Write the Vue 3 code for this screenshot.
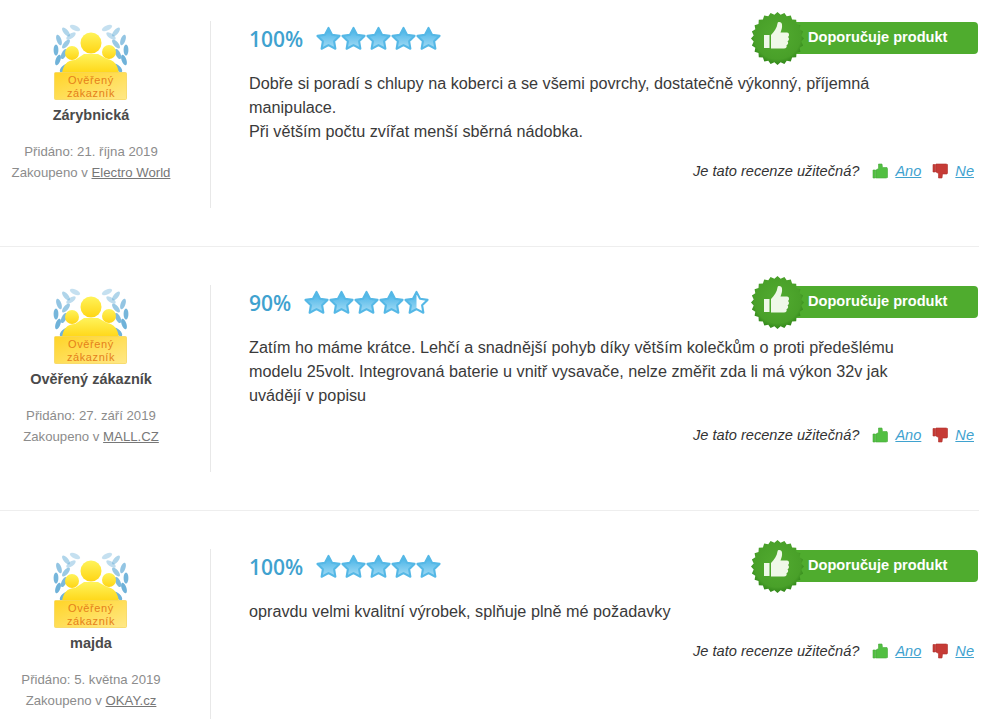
<script setup>
const reviews = [
  {
    name: 'Zárybnická',
    added: '21. října 2019',
    shop: 'Electro World',
    percent: 100,
    lines: [
      'Dobře si poradí s chlupy na koberci a se všemi povrchy, dostatečně výkonný, příjemná manipulace.',
      'Při větším počtu zvířat menší sběrná nádobka.'
    ]
  },
  {
    name: 'Ověřený zákazník',
    added: '27. září 2019',
    shop: 'MALL.CZ',
    percent: 90,
    lines: [
      'Zatím ho máme krátce. Lehčí a snadnější pohyb díky větším kolečkům o proti předešlému modelu 25volt. Integrovaná baterie u vnitř vysavače, nelze změřit zda li má výkon 32v jak uvádějí v popisu'
    ]
  },
  {
    name: 'majda',
    added: '5. května 2019',
    shop: 'OKAY.cz',
    percent: 100,
    lines: ['opravdu velmi kvalitní výrobek, splňuje plně mé požadavky']
  }
]

// pilovity okraj pecete
const sealPoints = () => {
  const pts = []
  const teeth = 24
  for (let i = 0; i < teeth * 2; i++) {
    const r = i % 2 ? 24 : 26.5
    const a = (Math.PI * i) / teeth
    pts.push(`${(26.5 + r * Math.cos(a)).toFixed(1)},${(26.5 + r * Math.sin(a)).toFixed(1)}`)
  }
  return pts.join(' ')
}
const seal = sealPoints()

// listky vavrinu: x, y, natoceni, pruhlednost
const leaves = [
  [22, 4, 25, 0.4],
  [13, 8, 50, 0.55],
  [6, 16, 70, 0.75],
  [3, 26, 90, 0.95],
  [5, 36, 110, 1],
  [11, 44, 135, 1],
  [18, 12, -35, 0.45],
  [13, 20, -50, 0.7],
  [11, 30, -65, 0.9]
]

const starPath = 'M12 1.8 L15.4 8.4 L22.6 9.5 L17.4 14.6 L18.6 21.8 L12 18.4 L5.4 21.8 L6.6 14.6 L1.4 9.5 L8.6 8.4 Z'

// kolik procent hvezdy je vyplneno
const starFill = (percent, i) => {
  const v = percent / 20 - i
  return Math.max(0, Math.min(1, v)) * 24
}
</script>

<template>
  <div class="list">
    <div v-for="(r, idx) in reviews" :key="idx" class="review">
      <div class="side">
        <svg class="avatar" width="76" height="76" viewBox="0 0 76 76">
          <defs>
            <linearGradient :id="`head${idx}`" x1="0" y1="0" x2="0" y2="1">
              <stop offset="0" stop-color="#fff35a" />
              <stop offset="1" stop-color="#ffd514" />
            </linearGradient>
            <linearGradient :id="`sign${idx}`" x1="0" y1="0" x2="1" y2="1">
              <stop offset="0" stop-color="#ffd427" />
              <stop offset="1" stop-color="#ffe887" />
            </linearGradient>
          </defs>
          <g fill="#6fb2d9">
            <ellipse v-for="(l, n) in leaves" :key="n" :cx="l[0]" :cy="l[1]" rx="5.5" ry="2.4" :opacity="l[3]" :transform="`rotate(${l[2]} ${l[0]} ${l[1]})`" />
          </g>
          <g fill="#6fb2d9" transform="translate(76 0) scale(-1 1)">
            <ellipse v-for="(l, n) in leaves" :key="n" :cx="l[0]" :cy="l[1]" rx="5.5" ry="2.4" :opacity="l[3]" :transform="`rotate(${l[2]} ${l[0]} ${l[1]})`" />
          </g>
          <circle cx="19" cy="29" r="7" :fill="`url(#head${idx})`" />
          <circle cx="56" cy="28" r="7" :fill="`url(#head${idx})`" />
          <path d="M9 50 C10 41 14 36 22 36 L31 30 L45 30 L54 35 C61 36 65 41 66 50 Z" :fill="`url(#head${idx})`" />
          <circle cx="38" cy="19" r="10.5" :fill="`url(#head${idx})`" />
          <rect x="1.5" y="48.5" width="72" height="27" rx="1" :fill="`url(#sign${idx})`" stroke="#f6d65a" stroke-width=".8" />
          <text x="38" y="60" class="sign-text">Ověřený</text>
          <text x="38" y="72.8" class="sign-text">zákazník</text>
        </svg>
        <div class="name">{{ r.name }}</div>
        <div class="meta">Přidáno: {{ r.added }}</div>
        <div class="meta">Zakoupeno v <a class="shop">{{ r.shop }}</a></div>
      </div>

      <div class="main">
        <div class="head">
          <span class="score">{{ r.percent }}%</span>
          <div class="stars">
            <svg v-for="i in 5" :key="i" width="25" height="25" viewBox="0 0 24 24">
              <defs>
                <linearGradient :id="`star${idx}-${i}`" x1="0" y1="0" x2="0" y2="1">
                  <stop offset="0" stop-color="#3fb0e6" />
                  <stop offset="1" stop-color="#a5dcf5" />
                </linearGradient>
                <clipPath :id="`clip${idx}-${i}`">
                  <rect x="0" y="0" :width="starFill(r.percent, i - 1)" height="24" />
                </clipPath>
              </defs>
              <path :d="starPath" fill="#fff" />
              <path :d="starPath" :fill="`url(#star${idx}-${i})`" :clip-path="`url(#clip${idx}-${i})`" />
              <path :d="starPath" fill="none" stroke="#55b8e6" stroke-width="2" stroke-linejoin="round" />
            </svg>
          </div>
          <div class="badge">
            <svg class="seal" width="53" height="53" viewBox="0 0 53 53">
              <defs>
                <radialGradient :id="`seal${idx}`" cx="50%" cy="45%" r="55%">
                  <stop offset="0" stop-color="#52ab30" />
                  <stop offset=".8" stop-color="#49a029" />
                  <stop offset="1" stop-color="#2f8418" />
                </radialGradient>
              </defs>
              <polygon :points="seal" :fill="`url(#seal${idx})`" />
              <path d="M13 23 H18.5 V36 H13 Z" fill="#eff8e8" />
              <path d="M20 23 C23 20 26 16 26.5 11.5 C26.7 9.5 30.5 9.5 31 12.5 C31.4 15.5 30.5 18 29.5 20.5 L36 20.5 C38.5 20.5 38.5 24 37 25 C38.5 26 38.3 28.6 36.5 29.3 C37.7 30.5 37.2 32.8 35.5 33.3 C36.2 35 35.2 36.5 33 36.5 L20 36.5 Z" fill="#eff8e8" />
            </svg>
            <span class="badge-bar">Doporučuje produkt</span>
          </div>
        </div>

        <div class="text">
          <p v-for="(line, n) in r.lines" :key="n">{{ line }}</p>
        </div>

        <div class="useful">
          <em>Je tato recenze užitečná?</em>
          <svg class="vote-ico" width="16" height="16" viewBox="0 0 16 16">
            <path d="M1 7 H3.5 V15 H1 Z M4 7 L6.5 5.5 L6.5 1 H10 L10.5 4.5 H15 L15.5 6 V14.5 L14 15 H4 Z" fill="#52bf42" stroke="#48ab3a" stroke-width=".6" />
          </svg>
          <a class="vote">Ano</a>
          <svg class="vote-ico no" width="16" height="16" viewBox="0 0 16 16">
            <path d="M1 1.5 H3.5 V9 H1 Z M4 1 H14 L15.5 1.5 V10 L15 11 H10.5 L10 15 H6.5 L6.5 10.5 L4 9 Z" fill="#c63b36" stroke="#b0302c" stroke-width=".6" />
          </svg>
          <a class="vote">Ne</a>
        </div>
      </div>
    </div>
  </div>
</template>

<style scoped>
.list {
  width: 979px;
  padding-top: 21px;
  font-family: "Liberation Sans", Arial, sans-serif;
  color: #333;
}
.review {
  display: flex;
  box-sizing: border-box;
  padding-bottom: 38px;
  margin-bottom: 38px;
  border-bottom: 1px solid #eee;
}
.side {
  width: 182px;
  height: 187px;
  padding-right: 28px;
  border-right: 1px solid #e8e8e8;
  text-align: center;
  flex-shrink: 0;
}
.avatar {
  display: block;
  margin: 3px auto 0;
}
.sign-text {
  font-family: "Liberation Sans", Arial, sans-serif;
  font-size: 11px;
  letter-spacing: 0.6px;
  fill: #e5801a;
  text-anchor: middle;
}
.name {
  margin-top: 6px;
  margin-bottom: 17px;
  font-size: 14.5px;
  line-height: 18px;
  font-weight: 700;
  color: #4a4a4a;
}
.meta {
  font-size: 13.2px;
  line-height: 21px;
  color: #8c8c8c;
}
.shop {
  color: #777;
  text-decoration: underline;
}
.main {
  flex: 1;
  margin-left: 38px;
  min-width: 0;
}
.head {
  display: flex;
  align-items: flex-start;
  height: 50px;
}
.score {
  font-family: "Open Sans", sans-serif;
  font-size: 21px;
  font-weight: 600;
  line-height: 36px;
  color: #3fa2cf;
}
.stars {
  display: flex;
  margin-left: 13px;
  margin-top: 5px;
}
.badge {
  display: flex;
  align-items: flex-start;
  margin-left: auto;
  margin-top: -9px;
  margin-right: 1px;
  position: relative;
}
.seal {
  position: relative;
  margin-right: -34px;
  z-index: 1;
}
.badge-bar {
  width: 208px;
  height: 32px;
  margin-top: 10px;
  box-sizing: border-box;
  padding-left: 38px;
  border-radius: 0 4px 4px 0;
  background: #4fac2e;
  color: #fff;
  font-size: 14.6px;
  font-weight: 700;
  line-height: 31px;
}
.text {
  width: 660px;
  font-size: 16.22px;
  line-height: 24px;
  color: #3a3a3a;
}
.text p {
  margin: 0;
}
.useful {
  display: flex;
  align-items: center;
  justify-content: flex-end;
  margin-top: 19px;
  padding-right: 5px;
  font-size: 14.6px;
  line-height: 18px;
}
.useful em {
  color: #333;
  margin-right: 13px;
}
.vote-ico {
  margin-right: 7px;
}
.vote-ico.no {
  margin-left: 11px;
}
.vote {
  color: #3fa2cf;
  font-style: italic;
  text-decoration: underline;
}
</style>

<style>
html, body {
  margin: 0;
  background: #fff;
  overflow: hidden;
}
</style>
